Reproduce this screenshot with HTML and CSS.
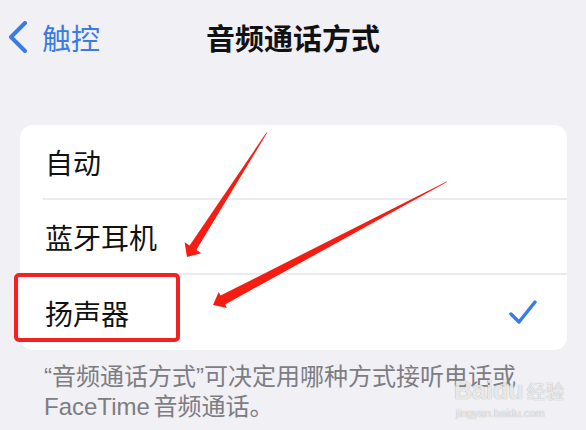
FILE: index.html
```html
<!DOCTYPE html>
<html lang="zh-CN">
<head>
    <meta charset="UTF-8">
    <meta name="viewport" content="width=device-width, initial-scale=1.0">
    <title>音频通话方式</title>
    <link rel="stylesheet" href="styles.css">
</head>
<body>

    <!-- Navigation bar -->
    <div class="nav">
        <div class="back">
            <svg class="chevron" width="20" height="32" viewBox="0 0 20 32">
                <polyline points="17,2 3,16 17,30" />
            </svg>
            <span>触控</span>
        </div>
        <div class="title">音频通话方式</div>
        <div></div>
    </div>

    <!-- Options -->
    <div class="card">
        <div class="row">
            <div class="row-inner">自动</div>
        </div>
        <div class="row">
            <div class="row-inner">蓝牙耳机</div>
        </div>
        <div class="row last">
            <div class="row-inner">
                <span>扬声器</span>
                <svg class="check" width="28" height="25" viewBox="0 0 28 25">
                    <polyline points="2,14 10,22 26,2" />
                </svg>
            </div>
        </div>
    </div>

    <p class="note">“音频通话方式”可决定用哪种方式接听电话或<br>FaceTime 音频通话。</p>

    <!-- Annotations -->
    <div class="mark-box"></div>
    <svg class="arrows" width="586" height="430" viewBox="0 0 586 430">
        <polygon points="267,133 196.3,249.9 201.4,253.2 187,257 184.6,242.3 189.6,245.6 266.4,132.6" />
        <polygon points="447,182 225.1,304.4 226.9,308 213,305 218.7,292 220.5,295.6 446.6,181.4" />
    </svg>

    <div class="watermark">
        <div class="wm-logo">Baidu<span class="wm-cn">经验</span></div>
        <div class="wm-url">jingyan.baidu.com</div>
    </div>

</body>
</html>
```

FILE: styles.css
```css
body {
    margin: 0;
    width: 586px;
    height: 430px;
    overflow: hidden;
    position: relative;
    background-color: #f0f0f5;
    font-family: "Liberation Sans", "Noto Sans CJK SC", sans-serif;
    color: #111;
}
.nav {
    height: 74px;
    display: grid;
    grid-template-columns: 1fr auto 1fr;
    align-items: center;
}
.back {
    display: flex;
    align-items: center;
    gap: 14px;
    padding-left: 8px;
    color: #3a7ce4;
    font-size: 29px;
}
.chevron polyline {
    fill: none;
    stroke: #3a7ce4;
    stroke-width: 4;
    stroke-linecap: round;
    stroke-linejoin: round;
}
.title {
    font-size: 29px;
    font-weight: bold;
}
.card {
    margin: 51px 19px 0 20px;
    background-color: #fff;
    border-radius: 13px;
    overflow: hidden;
}
.row {
    padding-left: 23px;
}
.row-inner {
    height: 73px;
    display: flex;
    align-items: center;
    justify-content: space-between;
    padding: 0 30px 0 2px;
    border-bottom: 2px solid #ebebef;
    font-size: 28px;
}
.last .row-inner {
    height: 75px;
    border-bottom: none;
}
.check polyline {
    fill: none;
    stroke: #3a7ce4;
    stroke-width: 3.5;
    stroke-linecap: round;
    stroke-linejoin: round;
}
.note {
    margin: 0;
    padding: 12px 0 0 44px;
    font-size: 24px;
    line-height: 30px;
    word-spacing: -3px;
    color: #7d7d82;
}
.mark-box {
    position: absolute;
    left: 14px;
    top: 273px;
    width: 158px;
    height: 61px;
    border: 4px solid #f22222;
    border-radius: 5px;
}
.arrows {
    position: absolute;
    left: 0;
    top: 0;
}
.arrows polygon {
    fill: #f51d12;
}
.watermark {
    position: absolute;
    left: 454px;
    top: 377px;
    color: rgba(255, 255, 255, 0.8);
    text-shadow: 0 0 1px rgba(110, 110, 110, 0.7);
}
.wm-logo {
    font-size: 25px;
    font-weight: bold;
    line-height: 27px;
}
.wm-cn {
    font-size: 19px;
    font-weight: normal;
    margin-left: 3px;
}
.wm-url {
    font-size: 11px;
    line-height: 14px;
    margin-left: 2px;
}
```
